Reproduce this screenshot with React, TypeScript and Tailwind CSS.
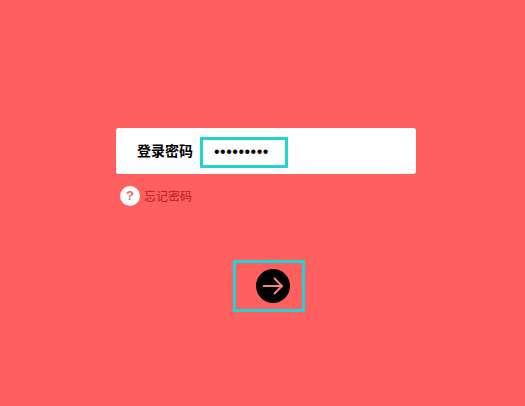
import React from "react";

export default function App() {
  return (
    <div className="h-[406px] w-[525px] overflow-hidden bg-[#ff5f5f] pt-[128px] font-['Liberation_Sans','Noto_Sans_CJK_SC',sans-serif]">
      <div className="ml-[116px] w-[300px]">
        <div className="flex h-[46px] items-center rounded-[3px] bg-white pl-[21px]">
          <span className="w-[55px] whitespace-nowrap text-[14px] font-bold text-black">登录密码</span>
          <div className="mt-[2px] ml-[8px] flex h-[31px] w-[88px] items-center border-[3px] border-[#22d3d3] bg-white pl-[11px]">
            <span className="whitespace-nowrap text-[16px] leading-none tracking-[0.5px] text-black">•••••••••</span>
          </div>
        </div>
        <div className="mt-[12px] ml-[4px] flex items-center">
          <div className="flex h-[20px] w-[20px] items-center justify-center rounded-full bg-white text-[13px] font-bold text-[#ff5f5f]">?</div>
          <span className="mt-[2px] ml-[4px] text-[12px] text-[#b91c1c]">忘记密码</span>
        </div>
      </div>
      <div className="mt-[54px] ml-[233px] flex h-[52px] w-[72px] items-center justify-center border-[3px] border-[#22d3d3] pl-[7px]">
        <div className="flex h-[34px] w-[34px] items-center justify-center rounded-full bg-black">
          <svg width="22" height="18" viewBox="0 0 22 18" fill="none" stroke="#ff7f7f" strokeWidth="2">
            <path d="M1 9h19M12 1l8 8-8 8" />
          </svg>
        </div>
      </div>
    </div>
  );
}
